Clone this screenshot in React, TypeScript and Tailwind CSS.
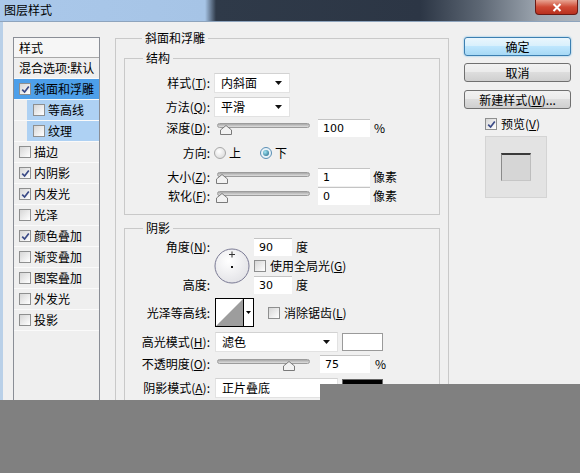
import React from 'react';

function Check({ checked }: { checked?: boolean }) {
  return (
    <span className="w-[12px] h-[12px] shrink-0 border border-[#8e8f8f] bg-[linear-gradient(135deg,#d6d6d6,#ffffff)] flex items-center justify-center">
      {checked && (
        <svg width="9" height="9" viewBox="0 0 9 9">
          <path d="M1.2 4.6 L3.6 7 L7.8 1.6" fill="none" stroke="#3a4a86" strokeWidth="1.7" />
        </svg>
      )}
    </span>
  );
}

function Radio({ on }: { on?: boolean }) {
  return (
    <span
      className={`w-[12px] h-[12px] shrink-0 rounded-full border flex items-center justify-center ${
        on ? 'border-[#5a8fb5] bg-[#e8f2f8]' : 'border-[#a8a8a8] bg-[radial-gradient(circle_at_40%_35%,#ffffff,#d4d4d4)]'
      }`}
    >
      {on && <span className="w-[6px] h-[6px] rounded-full bg-[radial-gradient(circle_at_35%_35%,#9fe6f5,#1b5f80)]" />}
    </span>
  );
}

function Arrow() {
  return (
    <svg width="7" height="4" viewBox="0 0 7 4">
      <path d="M0 0H7L3.5 4Z" fill="#111" />
    </svg>
  );
}

function Select({ className, text }: { className: string; text: string }) {
  return (
    <div className={`h-[20px] bg-white border border-[#e2e2e2] border-t-[#d2d2d2] flex items-center justify-between pl-[6px] pr-[7px] ${className}`}>
      <span>{text}</span>
      <Arrow />
    </div>
  );
}

function NumBox({ value, className }: { value: string; className: string }) {
  return (
    <div className={`h-[18px] bg-white border-t border-[#c4c4c4] pl-[5px] flex items-center text-[11px] font-['DejaVu_Sans',sans-serif] ${className}`}>
      {value}
    </div>
  );
}

function Slider({ thumb }: { thumb: number }) {
  return (
    <div className="relative w-[94px] h-[16px]">
      <div className="absolute left-[1px] right-0 top-[3px] h-[5px] rounded-[3px] border border-[#9c9c9c] bg-[linear-gradient(#a9a9a9,#dedede)]" />
      <svg className="absolute top-[5px]" style={{ left: thumb }} width="12" height="10" viewBox="0 0 12 10">
        <path d="M0.5 9.5V5L6 0.5L11.5 5V9.5Z" fill="#f2f2f2" stroke="#7a7a7a" />
      </svg>
    </div>
  );
}

function Label({ children }: { children: React.ReactNode }) {
  return <div className="w-[85px] shrink-0 text-right">{children}</div>;
}

const listItems: { text: string; checked?: boolean; sub?: boolean; active?: boolean }[] = [
  { text: '斜面和浮雕', checked: true, active: true },
  { text: '等高线', sub: true },
  { text: '纹理', sub: true },
  { text: '描边' },
  { text: '内阴影', checked: true },
  { text: '内发光', checked: true },
  { text: '光泽' },
  { text: '颜色叠加', checked: true },
  { text: '渐变叠加' },
  { text: '图案叠加' },
  { text: '外发光' },
  { text: '投影' },
];

export default function App() {
  return (
    <div className="relative w-[580px] h-[473px] overflow-hidden bg-[#f0f0f0] font-['Noto_Sans_CJK_SC',sans-serif] text-[12px] leading-[16px] text-black">
      {/* Title bar */}
      <div className="h-[22px] flex items-start bg-[linear-gradient(to_right,#aac8ea_0px,#a6c4e6_205px,#2f3a49_216px,#2c3645_420px,#5d6774_480px,#9ea7b1_540px,#aeb6be_580px)] border-b border-[#8ea4bd]">
        <span className="ml-[4px] mt-[3px] text-[12px] leading-[14px]">图层样式</span>
        <div className="ml-auto mr-[2px] w-[43px] h-[15px] rounded-b-[4px] border border-t-0 border-[#6b1a14] bg-[linear-gradient(#e8a593,#cf4a35_50%,#b8301e)] flex items-center justify-center">
          <svg width="10" height="9" viewBox="0 0 10 9">
            <path d="M1.5 1 L8.5 8 M8.5 1 L1.5 8" stroke="#fff" strokeWidth="2" />
          </svg>
        </div>
      </div>

      <div className="flex border-l-[3px] border-[#b9d0e8] h-[451px]">
        {/* Left list */}
        <div className="ml-[10px] mt-[15px] w-[87px] h-[380px] border border-[#8a8e96] bg-[#efefef] flex flex-col">
          <div className="h-[20px] pl-[5px] flex items-center border-b border-[#a8a8a8] bg-[#f6f6f6]">样式</div>
          <div className="h-[21px] pl-[5px] flex items-center border-b border-[#fafafa]">混合选项:默认</div>
          {listItems.map((it) => (
            <div key={it.text} className={`h-[21px] flex border-b border-[#fafafa] ${it.sub ? 'pl-[13px]' : ''}`}>
              <div
                className={`flex-1 flex items-center gap-[3px] ${it.sub ? 'pl-[6px] bg-[#aed1f3]' : 'pl-[5px]'} ${
                  it.active ? 'bg-[#4d9fe9]' : ''
                }`}
              >
                <Check checked={it.checked} />
                <span>{it.text}</span>
              </div>
            </div>
          ))}
        </div>

        {/* Main group */}
        <fieldset className="ml-[15px] mt-[8px] w-[334px] h-[440px] border border-[#c9c9c9] px-[8px]">
          <legend className="ml-[18px] px-[3px] leading-[16px]">斜面和浮雕</legend>

          <fieldset className="mt-[4px] border border-[#c9c9c9] pt-[5px] pb-[7px]">
            <legend className="ml-[18px] px-[3px] leading-[16px]">结构</legend>
            <div className="h-[24px] flex items-center">
              <Label>
                样式(<u>T</u>):
              </Label>
              <Select className="ml-[4px] w-[76px]" text="内斜面" />
            </div>
            <div className="h-[24px] flex items-center">
              <Label>
                方法(<u>Q</u>):
              </Label>
              <Select className="ml-[4px] w-[76px]" text="平滑" />
            </div>
            <div className="h-[18px] flex items-center">
              <Label>
                深度(<u>D</u>):
              </Label>
              <div className="ml-[6px]">
                <Slider thumb={4} />
              </div>
              <NumBox className="ml-[8px] w-[52px]" value="100" />
              <span className="ml-[4px]">%</span>
            </div>
            <div className="h-[32px] flex items-center">
              <Label>方向:</Label>
              <div className="ml-[4px] flex items-center gap-[3px]">
                <Radio />
                <span>上</span>
              </div>
              <div className="ml-[19px] flex items-center gap-[3px]">
                <Radio on />
                <span>下</span>
              </div>
            </div>
            <div className="h-[16px] flex items-center">
              <Label>
                大小(<u>Z</u>):
              </Label>
              <div className="ml-[6px]">
                <Slider thumb={0} />
              </div>
              <NumBox className="ml-[8px] w-[52px]" value="1" />
              <span className="ml-[3px]">像素</span>
            </div>
            <div className="h-[22px] flex items-center">
              <Label>
                软化(<u>F</u>):
              </Label>
              <div className="ml-[6px]">
                <Slider thumb={0} />
              </div>
              <NumBox className="ml-[8px] w-[52px]" value="0" />
              <span className="ml-[3px]">像素</span>
            </div>
          </fieldset>

          <fieldset className="mt-[5px] border border-[#c9c9c9] h-[260px]">
            <legend className="ml-[18px] px-[3px] leading-[16px]">阴影</legend>

            <div className="mt-[2px] h-[56px] flex">
              <div className="w-[85px] shrink-0 flex flex-col justify-between text-right">
                <div className="h-[18px] leading-[18px]">
                  角度(<u>N</u>):
                </div>
                <div className="h-[18px] leading-[18px]">高度:</div>
              </div>
              <svg className="ml-[4px] mt-[10px]" width="36" height="36" viewBox="0 0 36 36">
                <defs>
                  <radialGradient id="dial" cx="40%" cy="35%" r="70%">
                    <stop offset="0" stopColor="#ffffff" />
                    <stop offset="1" stopColor="#e2e2e6" />
                  </radialGradient>
                </defs>
                <circle cx="18" cy="18" r="17" fill="url(#dial)" stroke="#7a7a94" />
                <path d="M18 3.5V9.5M15 6.5H21" stroke="#333" strokeWidth="1" />
                <rect x="17" y="18" width="2" height="2" fill="#111" />
              </svg>
              <div className="ml-[4px] flex flex-col">
                <div className="h-[18px] flex items-center">
                  <NumBox className="w-[38px]" value="90" />
                  <span className="ml-[4px]">度</span>
                </div>
                <div className="h-[20px] flex items-center gap-[4px]">
                  <Check />
                  <span>
                    使用全局光(<u>G</u>)
                  </span>
                </div>
                <div className="h-[18px] flex items-center">
                  <NumBox className="w-[38px]" value="30" />
                  <span className="ml-[4px]">度</span>
                </div>
              </div>
            </div>

            <div className="mt-[4px] h-[29px] flex items-center">
              <Label>光泽等高线:</Label>
              <div className="ml-[5px] flex">
                <svg width="29" height="29" viewBox="0 0 29 29">
                  <rect x="0.5" y="0.5" width="28" height="28" fill="#fff" stroke="#000" />
                  <path d="M1 28 L28 1 V28 Z" fill="#9d9d9d" />
                </svg>
                <div className="w-[10px] h-[29px] border border-l-0 border-black bg-white flex items-center justify-center">
                  <svg width="5" height="3" viewBox="0 0 5 3">
                    <path d="M0 0H5L2.5 3Z" fill="#000" />
                  </svg>
                </div>
              </div>
              <div className="ml-[14px] flex items-center gap-[4px]">
                <Check />
                <span>
                  消除锯齿(<u>L</u>)
                </span>
              </div>
            </div>

            <div className="mt-[5px] h-[20px] flex items-center">
              <Label>
                高光模式(<u>H</u>):
              </Label>
              <Select className="ml-[5px] w-[123px]" text="滤色" />
              <div className="ml-[4px] w-[41px] h-[18px] bg-white border border-[#9a9a9a]" />
            </div>

            <div className="mt-[2px] h-[20px] flex items-center">
              <Label>
                不透明度(<u>O</u>):
              </Label>
              <div className="ml-[6px]">
                <Slider thumb={67} />
              </div>
              <NumBox className="ml-[10px] w-[50px]" value="75" />
              <span className="ml-[5px]">%</span>
            </div>

            <div className="mt-[4px] h-[20px] flex items-center">
              <Label>
                阴影模式(<u>A</u>):
              </Label>
              <Select className="ml-[5px] w-[123px]" text="正片叠底" />
              <div className="ml-[4px] w-[41px] h-[18px] bg-black border border-[#666]" />
            </div>
          </fieldset>
        </fieldset>

        {/* Right column */}
        <div className="ml-[15px] w-[107px] flex flex-col">
          <button className="mt-[15px] h-[19px] rounded-[3px] border border-[#3c7fb1] bg-[linear-gradient(#eaf6fd_0%,#d9f0fc_45%,#bee6fd_50%,#a7d9f5_100%)] shadow-[0_0_2px_#62b5e8] leading-[16px]">
            确定
          </button>
          <button className="mt-[7px] h-[19px] rounded-[3px] border border-[#707070] bg-[linear-gradient(#f2f2f2_0%,#ebebeb_45%,#dddddd_50%,#cfcfcf_100%)] leading-[16px]">
            取消
          </button>
          <button className="mt-[8px] h-[19px] rounded-[3px] border border-[#707070] bg-[linear-gradient(#f2f2f2_0%,#ebebeb_45%,#dddddd_50%,#cfcfcf_100%)] leading-[16px]">
            新建样式(<u>W</u>)...
          </button>
          <div className="mt-[7px] h-[16px] flex items-center gap-[4px] pl-[21px]">
            <Check checked />
            <span>
              预览(<u>V</u>)
            </span>
          </div>
          <div className="mt-[4px] ml-[21px] w-[62px] h-[62px] bg-[#e3e3e3] border border-[#d4d4d4] flex justify-center pt-[16px]">
            <div className="w-[30px] h-[28px] bg-[#d6d6d6] border-t-2 border-l border-r border-b border-t-[#3a3a3a] border-l-[#8a8a8a] border-r-[#bdbdbd] border-b-[#c6c6c6]" />
          </div>
        </div>
      </div>

      {/* Grey overlay covering lower part */}
      <div className="absolute left-[320px] right-0 top-[384px] bottom-0 bg-[#808080]" />
      <div className="absolute left-0 right-0 top-[400px] bottom-0 bg-[#808080]" />
    </div>
  );
}
